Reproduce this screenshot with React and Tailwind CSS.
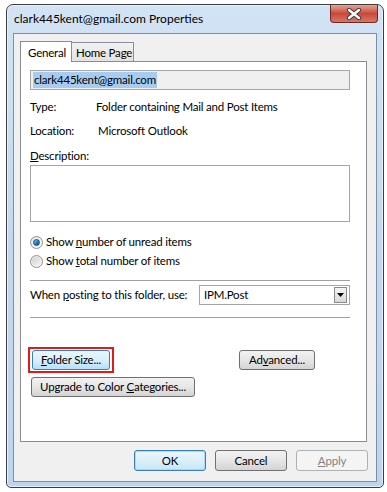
import React from "react";

const font = { fontFamily: 'Lato, "Noto Sans", sans-serif' };

function Btn({ children, className = "", variant = "normal" }) {
  const styles = {
    normal:
      "border-[#707070] bg-gradient-to-b from-[#f2f2f2] via-[#e6e6e6] to-[#d4d4d4] text-black",
    hover:
      "border-[#3c7fb1] bg-gradient-to-b from-[#eaf6fd] via-[#d9f0fc] to-[#b5e0f8] text-black",
    def:
      "border-[#3c7fb1] bg-gradient-to-b from-[#eaf6fd] via-[#dceffa] to-[#c6e6f8] text-black shadow-[inset_0_0_0_1px_#a8d8f5]",
    disabled: "border-[#adb2b5] bg-[#f4f4f4] text-[#838383]",
  };
  return (
    <div
      className={`flex h-[21px] items-center justify-center whitespace-nowrap rounded-[3px] border text-[11.5px] leading-none tracking-[-0.2px] ${styles[variant]} ${className}`}
    >
      {children}
    </div>
  );
}

function Radio({ checked }) {
  return (
    <div className="flex h-[13px] w-[13px] shrink-0 items-center justify-center rounded-full border border-[#8e8f8f] bg-gradient-to-br from-[#e6e6e6] to-[#ffffff]">
      {checked ? (
        <div className="h-[7px] w-[7px] rounded-full border border-[#17507e] bg-gradient-to-br from-[#8fd0f4] via-[#2b7fc3] to-[#0d4d8a]" />
      ) : (
        <div className="h-[9px] w-[9px] rounded-full bg-gradient-to-br from-[#d3d3d3] to-[#f3f3f3]" />
      )}
    </div>
  );
}

export default function App() {
  return (
    <div className="h-[492px] w-[387px] bg-white pl-[6px] pt-[4px]" style={font}>
      <div className="flex h-[484px] w-[378px] flex-col rounded-t-[7px] rounded-b-[5px] border border-[#3d3d3d] bg-gradient-to-b from-[#d2e3f5] via-[#c3d8ef] to-[#bcd5ee] shadow-[inset_0_0_0_1px_#e8f1fb]">
        {/* title bar */}
        <div className="flex h-[28px] items-start">
          <div className="whitespace-nowrap pl-[7px] pt-[5px] text-[12px] leading-[18px] text-black">
            clark445kent@gmail.com Properties
          </div>
          <div className="ml-auto mr-[5px] flex h-[18px] w-[48px] items-center justify-center rounded-b-[4px] border border-t-0 border-[#6b2b24] bg-gradient-to-b from-[#e6a393] via-[#c8493a] to-[#d8756a]">
            <svg width="16" height="12" viewBox="0 0 16 12">
              <path d="M3 2 L13 10 M13 2 L3 10" stroke="#3a3a3a" strokeWidth="4.2" strokeLinecap="round" />
              <path d="M3 2 L13 10 M13 2 L3 10" stroke="#ffffff" strokeWidth="2.4" strokeLinecap="round" />
            </svg>
          </div>
        </div>
        {/* client */}
        <div className="mx-[6px] flex h-[449px] flex-col border border-[#7d8fa3] bg-[#f0f0f0] px-[6px]">
          {/* tabs */}
          <div className="mt-[7px] flex items-end text-[11.5px] tracking-[-0.2px]">
            <div className="relative z-10 -mb-px flex h-[21px] w-[52px] items-start whitespace-nowrap border border-b-0 border-[#898c95] bg-white pl-[7px] pt-[3px] leading-[15px]">
              General
            </div>
            <div className="flex h-[19px] w-[62px] items-start whitespace-nowrap border border-b-0 border-l-0 border-[#898c95] bg-gradient-to-b from-[#f2f2f2] to-[#e3e3e3] pl-[4px] pt-[2px] leading-[15px]">
              Home Page
            </div>
          </div>
          {/* panel */}
          <div className="flex h-[381px] w-[347px] flex-col whitespace-nowrap border border-[#898c95] bg-white pl-[9px] pr-[16px] text-[11.5px] leading-none tracking-[-0.2px] text-black">
            <div className="mt-[8px] flex h-[20px] items-center border border-[#a5a5a5] bg-[#f0f0f0] pl-[2px]">
              <span className="bg-[#a6cdf1] px-px leading-[16px]">clark445kent@gmail.com</span>
            </div>
            <div className="mt-[8px] flex h-[18px] items-center">
              <span className="w-[66px]">Type:</span>
              <span>Folder containing Mail and Post Items</span>
            </div>
            <div className="mt-[6px] flex h-[18px] items-center">
              <span className="w-[68px]">Location:</span>
              <span>Microsoft Outlook</span>
            </div>
            <div className="mt-[7px] flex h-[18px] items-center">
              <span><span className="underline">D</span>escription:</span>
            </div>
            <div className="h-[57px] border border-[#a5a5a5] bg-white" />
            <div className="mt-[11px] flex h-[18px] items-center gap-[3px]">
              <Radio checked />
              <span>Show <span className="underline">n</span>umber of unread items</span>
            </div>
            <div className="mt-px flex h-[18px] items-center gap-[3px]">
              <Radio />
              <span>Show <span className="underline">t</span>otal number of items</span>
            </div>
            <div className="mt-[10px] h-px bg-[#a0a0a0]" />
            <div className="mt-[4px] flex h-[20px] items-center">
              <span>When <span className="underline">p</span>osting to this folder, use:</span>
              <div className="ml-auto flex h-[20px] w-[151px] items-center border border-[#a5a5a5] bg-white pl-[4px] pr-[2px]">
                <span>IPM.Post</span>
                <div className="ml-auto flex h-[16px] w-[13px] items-center justify-center border border-[#8a8a8a] bg-gradient-to-b from-[#f4f4f4] to-[#d9d9d9]">
                  <svg width="7" height="4" viewBox="0 0 7 4">
                    <path d="M0 0 H7 L3.5 4 Z" fill="#000" />
                  </svg>
                </div>
              </div>
            </div>
            <div className="mt-[12px] h-px bg-[#a0a0a0]" />
            <div className="mt-[29px] flex items-center">
              <div className="-ml-[2px] border-2 border-[#e41a1a] px-[2px] py-px">
                <Btn variant="hover" className="w-[78px] !h-[20px]">
                  <span><span className="underline">F</span>older Size...</span>
                </Btn>
              </div>
              <Btn className="ml-[125px] w-[76px] !h-[20px]">
                <span>Ad<span className="underline">v</span>anced...</span>
              </Btn>
            </div>
            <div className="mt-[4px] flex">
              <Btn className="ml-px w-[164px] !h-[20px]">
                <span>Upgrade to Color <span className="underline">C</span>ategories...</span>
              </Btn>
            </div>
          </div>
          {/* bottom buttons */}
          <div className="mt-[8px] flex justify-end gap-[9px] pr-[2px]">
            <Btn variant="def" className="w-[72px]">OK</Btn>
            <Btn className="w-[72px]">Cancel</Btn>
            <Btn variant="disabled" className="w-[72px]">
              <span><span className="underline">A</span>pply</span>
            </Btn>
          </div>
        </div>
      </div>
    </div>
  );
}
